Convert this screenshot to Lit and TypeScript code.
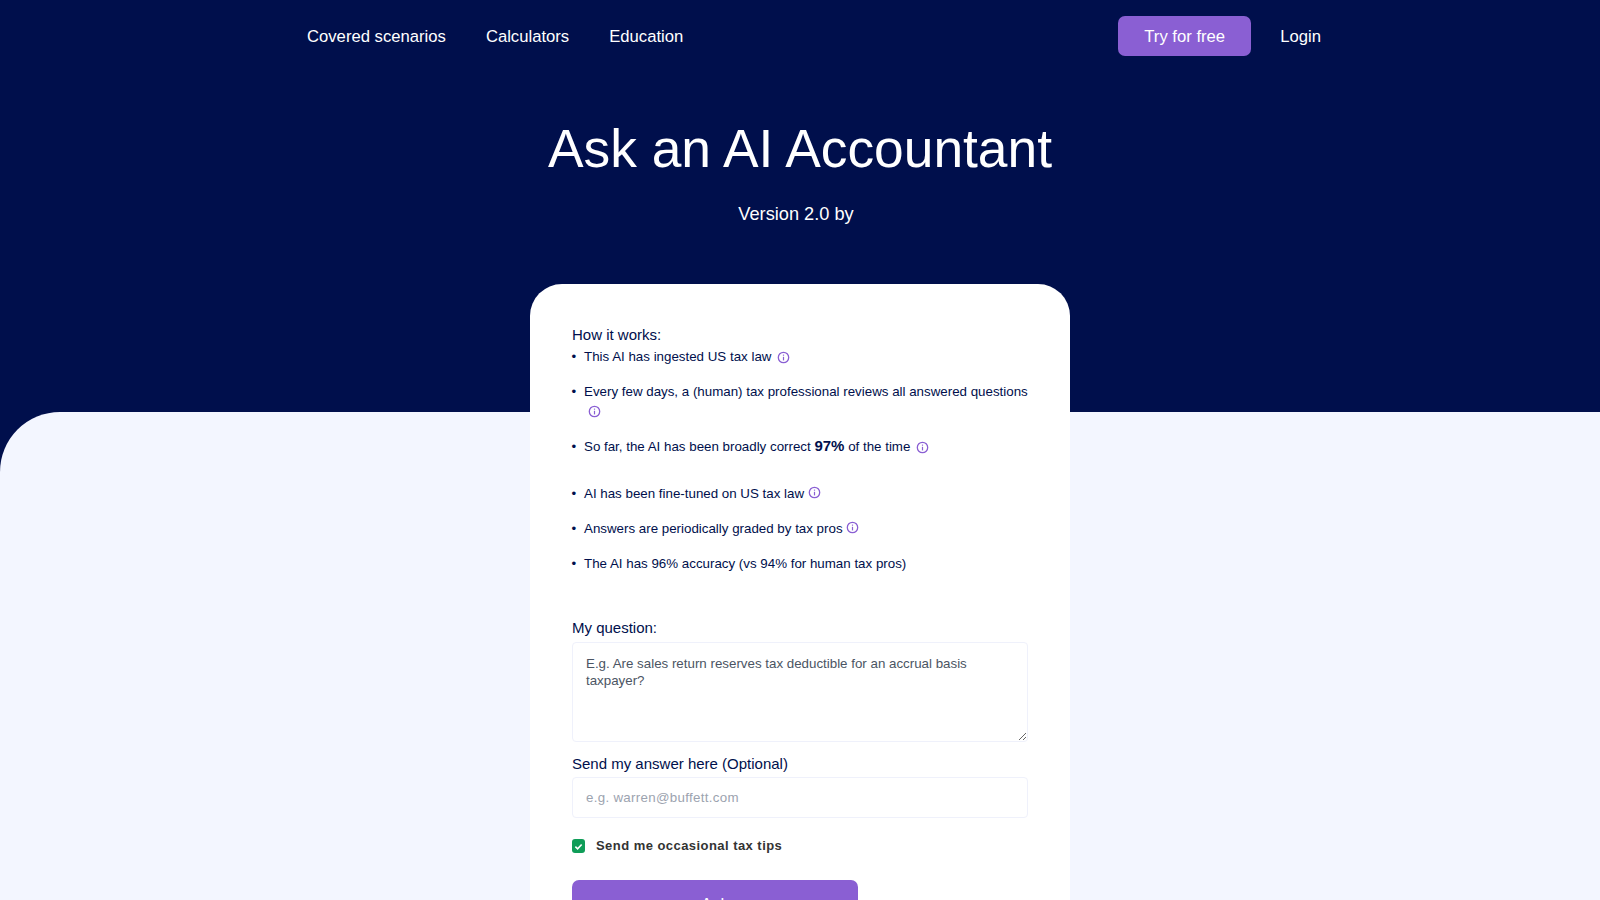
import { LitElement, html, css } from "lit";
import { customElement } from "lit/decorators.js";

const info = (cls = "") => html`<svg class="info ${cls}" viewBox="0 0 13 13" aria-hidden="true">
  <circle cx="6.5" cy="6.5" r="5.2" fill="none" stroke="currentColor" stroke-width="1.3"></circle>
  <path d="M6.5 5.8V9.4" stroke="currentColor" stroke-width="1.2" fill="none"></path>
  <path d="M6.5 3.6V4.7" stroke="currentColor" stroke-width="1.2" fill="none"></path>
</svg>`;

@customElement("app-root")
export class AppRoot extends LitElement {
  static styles = css`
    :host {
      display: block;
      background: #000f4c;
      font-family: "Liberation Sans", Arial, sans-serif;
      color: #000f4c;
      height: 900px;
      overflow: hidden;
    }
    * { box-sizing: border-box; }
    .nav {
      width: 1014px;
      margin-left: 307px;
      height: 73px;
      display: flex;
      align-items: center;
      color: #fff;
      font-size: 16.67px;
    }
    .links { display: flex; gap: 40px; flex: 1; }
    .try {
      width: 133px;
      height: 40px;
      margin-top: -1px;
      padding-top: 1px;
      background: #8a5fd3;
      border-radius: 7px;
      display: flex;
      align-items: center;
      justify-content: center;
      margin-right: 29px;
    }
    .hero { text-align: center; color: #fff; }
    h1 {
      margin: 42px 0 0;
      font-size: 53.33px;
      line-height: 68px;
      font-weight: 400;
    }
    .version {
      margin: 19px 8px 0 0;
      font-size: 18.2px;
      line-height: 24px;
    }
    .sheet {
      margin-top: 186px;
      background: #f3f6ff;
      border-top-left-radius: 60px;
      height: 600px;
    }
    .card {
      position: relative;
      top: -128px;
      width: 540px;
      margin: 0 auto;
      background: #fff;
      border-radius: 32px 32px 0 0;
      padding: 41px 42px 40px;
    }
    .label { font-size: 15px; line-height: 20px; }
    ul {
      margin: 0;
      padding: 0 0 0 12px;
      list-style: none;
      font-size: 13.33px;
      line-height: 20px;
    }
    li { margin-bottom: 15px; }
    li::before {
      content: "\\2022";
      display: inline-block;
      width: 12px;
      margin-left: -12.5px;
      margin-right: 0.5px;
    }
    ul.first { margin-top: 2px; }
    ul.first li:nth-child(2) { line-height: 19px; margin-bottom: 16px; }
    ul.first li:nth-child(3) { margin-bottom: 27px; }
    .info { width: 13px; height: 13px; color: #8a5fd3; vertical-align: -2.5px; margin-left: 1.5px; }
    .info.up { vertical-align: -0.5px; margin-left: 0; }
    .info.wrap { margin-left: 3.5px; }
    b { font-size: 15px; }
    .q { margin-top: 44px; }
    textarea, input.mail {
      display: block;
      width: 100%;
      border: 1.5px solid #eff1fb;
      border-radius: 4px;
      outline: none;
      background: #fff;
      font-family: inherit;
      font-size: 13.33px;
      color: #374151;
    }
    textarea {
      height: 100px;
      margin-top: 4px;
      padding: 12px 13px;
      line-height: 17px;
      resize: vertical;
    }
    textarea::placeholder { color: #4b5563; opacity: 1; }
    input.mail { height: 41px; margin-top: 3px; padding: 0 13px; letter-spacing: 0.3px; }
    input.mail::placeholder { color: #9ca3af; opacity: 1; }
    .send { margin-top: 11.5px; }
    .tips {
      display: flex;
      align-items: center;
      gap: 11px;
      margin-top: 19.5px;
      font-size: 13px;
      font-weight: 700;
      color: #333;
      letter-spacing: 0.45px;
      line-height: 18px;
    }
    .box {
      width: 13px;
      height: 14px;
      border-radius: 3px;
      background: #0f9d58;
      display: flex;
      align-items: center;
      justify-content: center;
    }
    .box svg { width: 9px; height: 9px; }
    .ask {
      display: block;
      margin-top: 25px;
      width: 286px;
      height: 50px;
      background: #8a5fd3;
      color: #fff;
      border: none;
      border-radius: 7px;
      font-family: inherit;
      font-size: 16.67px;
      font-weight: 400;
    }
  `;

  render() {
    return html`
      <div class="nav">
        <div class="links">
          <span>Covered scenarios</span><span>Calculators</span><span>Education</span>
        </div>
        <span class="try">Try for free</span>
        <span>Login</span>
      </div>
      <div class="hero">
        <h1>Ask an AI Accountant</h1>
        <p class="version">Version 2.0 by</p>
      </div>
      <div class="sheet">
        <div class="card">
          <div class="label">How it works:</div>
          <ul class="first">
            <li>This AI has ingested US tax law ${info()}</li>
            <li>Every few days, a (human) tax professional reviews all answered questions ${info("wrap")}</li>
            <li>So far, the AI has been broadly correct <b>97%</b> of the time ${info()}</li>
          </ul>
          <ul>
            <li>AI has been fine-tuned on US tax law ${info("up")}</li>
            <li>Answers are periodically graded by tax pros ${info("up")}</li>
            <li>The AI has 96% accuracy (vs 94% for human tax pros)</li>
          </ul>
          <div class="label q">My question:</div>
          <textarea placeholder="E.g. Are sales return reserves tax deductible for an accrual basis taxpayer?"></textarea>
          <div class="label send">Send my answer here (Optional)</div>
          <input class="mail" type="text" placeholder="e.g. warren@buffett.com" />
          <label class="tips">
            <span class="box"><svg viewBox="0 0 10 10"><path d="M1.5 5.2 4 7.6 8.5 2.8" fill="none" stroke="#fff" stroke-width="1.8"></path></svg></span>
            Send me occasional tax tips
          </label>
          <button class="ask">Ask</button>
        </div>
      </div>
    `;
  }
}
